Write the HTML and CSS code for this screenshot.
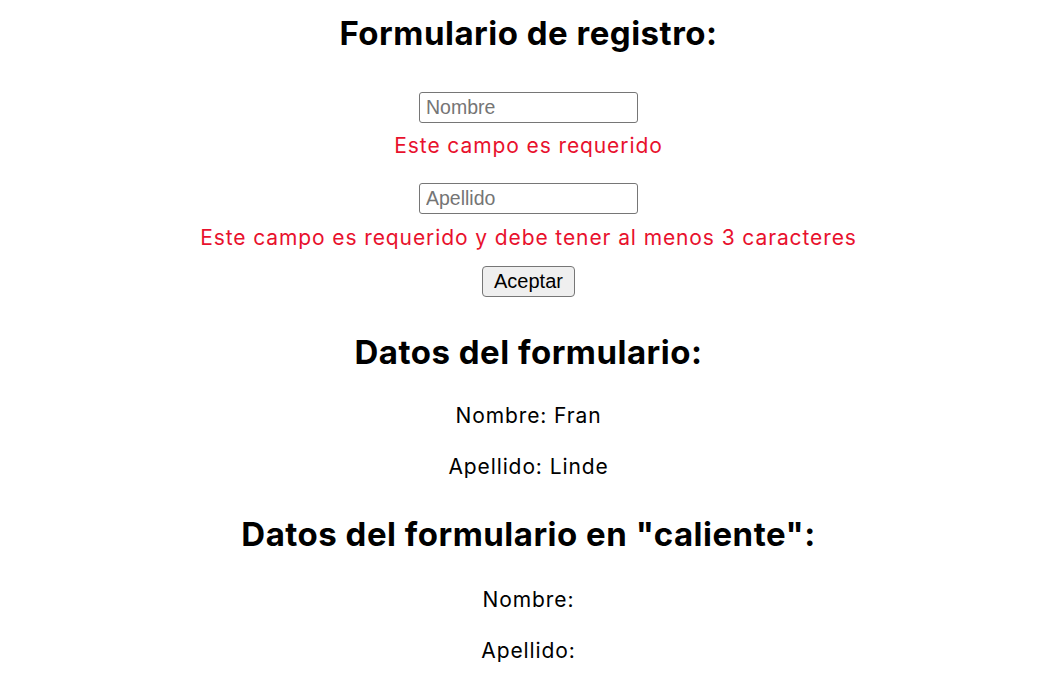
FILE: index.html
```html
<!DOCTYPE html>
<html lang="es">
<head>
<meta charset="utf-8">
<title>Formulario de registro</title>
<link rel="stylesheet" href="styles.css">
</head>
<body>
<main class="page">
  <h1 class="title">Formulario de registro:</h1>
  <form class="form">
    <input class="input input-first" type="text" placeholder="Nombre">
    <p class="error error-first">Este campo es requerido</p>
    <input class="input input-second" type="text" placeholder="Apellido">
    <p class="error error-second">Este campo es requerido y debe tener al menos 3 caracteres</p>
    <button class="button" type="button">Aceptar</button>
  </form>
  <section class="data data-first">
    <h2 class="title">Datos del formulario:</h2>
    <p class="line line-first">Nombre: Fran</p>
    <p class="line line-second">Apellido: Linde</p>
  </section>
  <section class="data data-second">
    <h2 class="title">Datos del formulario en "caliente":</h2>
    <p class="line line-first">Nombre: </p>
    <p class="line line-second">Apellido: </p>
  </section>
</main>
</body>
</html>
```
FILE: styles.css
```css
html, body {
  margin: 0;
  padding: 0;
  background: #ffffff;
}

body {
  font-family: Inter, "Noto Sans", sans-serif;
  font-size: 21px;
  letter-spacing: 0.9px;
  line-height: 24px;
  color: #000000;
}

.page {
  display: flex;
  flex-direction: column;
  align-items: center;
  padding-top: 14px;
}

.title {
  margin: 0;
  font-size: 33px;
  letter-spacing: 0.5px;
  line-height: 38px;
  font-weight: 700;
  text-align: center;
}

.form {
  display: flex;
  flex-direction: column;
  align-items: center;
  margin-top: 40px;
}

.input {
  box-sizing: border-box;
  width: 219px;
  height: 31px;
  margin: 0;
  padding: 0 6px;
  border: 1px solid #767676;
  border-radius: 3px;
  font-family: "Liberation Sans", Arial, sans-serif;
  font-size: 19.5px;
  letter-spacing: 0;
  color: #000;
  background: #fff;
  outline: none;
}

.input::placeholder {
  color: #757575;
}

.input-second {
  margin-top: 25px;
}

.error {
  margin: 11px 0 0;
  color: #e8112d;
  text-align: center;
}

.error-second {
  margin-top: 12px;
}

.button {
  box-sizing: border-box;
  width: 93px;
  height: 31px;
  margin-top: 16px;
  padding: 0;
  border: 1px solid #767676;
  border-radius: 4px;
  background: #efefef;
  font-family: "Liberation Sans", Arial, sans-serif;
  font-size: 20px;
  letter-spacing: 0;
  color: #000;
}

.data {
  display: flex;
  flex-direction: column;
  align-items: center;
}

.data-first {
  margin-top: 36px;
}

.data-second {
  margin-top: 36px;
}

.line {
  margin: 0;
  text-align: center;
}

.line-first {
  margin-top: 33px;
}

.line-second {
  margin-top: 27px;
}

.data-second .line-first {
  margin-top: 35px;
}

.data-second .line-second {
  margin-top: 27px;
}
```
